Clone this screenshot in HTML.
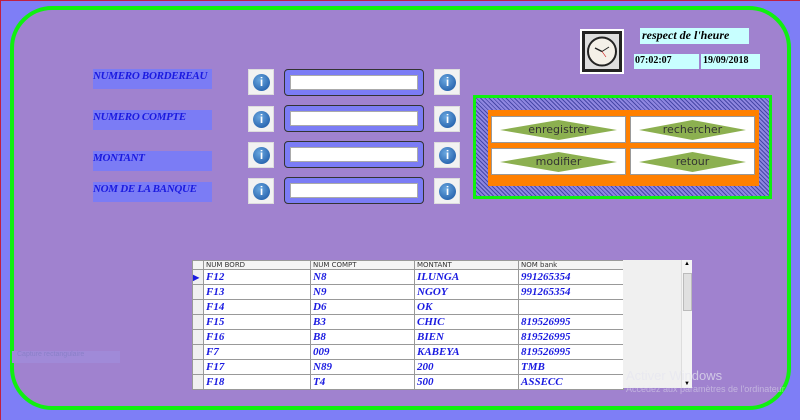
<!DOCTYPE html>
<html><head><meta charset="utf-8"><style>
*{margin:0;padding:0;box-sizing:border-box}
body{width:800px;height:420px;overflow:hidden;background:#7e7ef6;position:relative;font-family:"Liberation Serif",serif}
.frame{position:absolute;left:0;top:0;width:800px;height:420px;border-left:1px solid #c02040;border-top:1px solid #c02040}
.inner{position:absolute;left:10px;top:6px;width:781px;height:404px;border:4px solid #10f010;border-radius:42px;background:#a082cf}
.lbl{position:absolute;left:93px;width:119px;height:20px;background:#7b7cf5;color:#1a1ae0;font-weight:bold;font-style:italic;font-size:11px;padding-top:1px;letter-spacing:-0.3px}
.ib{position:absolute;width:26px;height:26px;background:#f2f2f2;border:1px solid #ddd}
.ib::after{content:"i";position:absolute;left:4px;top:4px;width:17px;height:17px;border-radius:50%;background:radial-gradient(circle at 40% 35%,#6aa8e0,#1450a0);color:#fff;font:bold 12px "Liberation Sans",sans-serif;text-align:center;line-height:17px}
.tb{position:absolute;left:284px;width:140px;height:27px;background:#7b7cf5;border:1px solid #333;border-radius:4px}
.tb div{position:absolute;left:5px;top:5px;width:128px;height:15px;background:#fff;border:1px solid #aaa}
.btnbox{position:absolute;left:473px;top:95px;width:299px;height:104px;border:3px solid #10f010;background:repeating-linear-gradient(45deg,#4848a8 0 1px,#8e86e0 1px 3px)}
.or{position:absolute;left:12px;top:12px;width:271px;height:76px;background:#ff8000}
.b{position:absolute;width:135px;height:27px;background:#fff;border:1px solid #999;font:11px "DejaVu Sans",sans-serif;color:#333;text-align:center;line-height:25px}
.b::before{content:"";position:absolute;left:8px;right:8px;top:3px;height:20px;background:#8cb050;clip-path:polygon(0 50%,50% 0,100% 50%,50% 100%)}
.b span{position:relative}
.cy{position:absolute;background:#c8ffff;font-weight:bold;font-size:10px;color:#000}
table{position:absolute;left:192px;top:260px;border-collapse:collapse;background:#fff}
td{border:1px solid #999;height:15px;line-height:13px;font-weight:bold;font-style:italic;font-size:11px;color:#1a1ae0;padding:0 0 0 2px;white-space:nowrap}
th{border:1px solid #999;height:9px;line-height:8px;font:normal 7px "DejaVu Sans",sans-serif;color:#333;text-align:left;padding-left:2px;background:#f4f4f4}
td.rh{background:#f0f0f0;width:11px;padding:0;color:#1a1ae0;font-style:normal;font-size:8px}
</style></head><body>
<div class="frame"></div>
<div class="inner"></div>
<div class="lbl" style="top:69px">NUMERO BORDEREAU</div>
<div class="lbl" style="top:110px">NUMERO COMPTE</div>
<div class="lbl" style="top:151px">MONTANT</div>
<div class="lbl" style="top:182px">NOM DE LA BANQUE</div>
<div class="ib" style="left:248px;top:69px"></div><div class="ib" style="left:434px;top:69px"></div>
<div class="ib" style="left:248px;top:106px"></div><div class="ib" style="left:434px;top:106px"></div>
<div class="ib" style="left:248px;top:142px"></div><div class="ib" style="left:434px;top:142px"></div>
<div class="ib" style="left:248px;top:178px"></div><div class="ib" style="left:434px;top:178px"></div>
<div class="tb" style="top:69px"><div></div></div>
<div class="tb" style="top:105px"><div></div></div>
<div class="tb" style="top:141px"><div></div></div>
<div class="tb" style="top:177px"><div></div></div>
<div style="position:absolute;left:580px;top:29px;width:44px;height:45px;background:#fff;padding:2px"><div style="width:40px;height:41px;border:3px solid #222;background:#ddd;padding:2px"><svg width="30" height="31" viewBox="0 0 30 31"><circle cx="15" cy="15.5" r="14" fill="#f4f0e8" stroke="#222" stroke-width="2"/><line x1="15" y1="15.5" x2="8" y2="12" stroke="#222" stroke-width="1.5"/><line x1="15" y1="15.5" x2="22" y2="11" stroke="#222" stroke-width="1"/><line x1="15" y1="15.5" x2="19" y2="21" stroke="#c00" stroke-width="0.6"/></svg></div></div>
<div class="cy" style="left:640px;top:28px;width:109px;height:16px;font-size:12px;font-style:italic;padding-left:2px">respect de l'heure</div>
<div class="cy" style="left:634px;top:54px;width:65px;height:15px;padding-left:1px;line-height:13px">07:02:07</div>
<div class="cy" style="left:701px;top:54px;width:59px;height:15px;padding-left:2px;line-height:13px">19/09/2018</div>
<div class="btnbox"><div class="or">
<div class="b" style="left:3px;top:6px"><span>enregistrer</span></div>
<div class="b" style="left:142px;top:6px;width:125px"><span>rechercher</span></div>
<div class="b" style="left:3px;top:38px"><span>modifier</span></div>
<div class="b" style="left:142px;top:38px;width:125px"><span>retour</span></div>
</div></div>
<table>
<tr><th style="width:11px;padding:0"></th><th style="width:107px">NUM BORD</th><th style="width:104px">NUM COMPT</th><th style="width:104px">MONTANT</th><th style="width:105px">NOM bank</th></tr>
<tr><td class="rh">▶</td><td>F12</td><td>N8</td><td>ILUNGA</td><td>991265354</td></tr>
<tr><td class="rh"></td><td>F13</td><td>N9</td><td>NGOY</td><td>991265354</td></tr>
<tr><td class="rh"></td><td>F14</td><td>D6</td><td>OK</td><td></td></tr>
<tr><td class="rh"></td><td>F15</td><td>B3</td><td>CHIC</td><td>819526995</td></tr>
<tr><td class="rh"></td><td>F16</td><td>B8</td><td>BIEN</td><td>819526995</td></tr>
<tr><td class="rh"></td><td>F7</td><td>009</td><td>KABEYA</td><td>819526995</td></tr>
<tr><td class="rh"></td><td>F17</td><td>N89</td><td>200</td><td>TMB</td></tr>
<tr><td class="rh"></td><td>F18</td><td>T4</td><td>500</td><td>ASSECC</td></tr>
</table>
<div style="position:absolute;left:623px;top:260px;width:58px;height:128px;background:#f0f0f0"></div>
<div style="position:absolute;left:681px;top:260px;width:11px;height:128px;background:#f4f4f4;border-left:1px solid #ddd"><div style="position:absolute;left:1px;top:13px;width:9px;height:38px;background:#e0e0e0;border:1px solid #bbb"></div><div style="position:absolute;left:2px;top:1px;font-size:6px">▲</div><div style="position:absolute;left:2px;bottom:1px;font-size:6px">▼</div></div>
<div style="position:absolute;left:12px;top:351px;width:108px;height:12px;background:#a08ad8;font:7px 'Liberation Sans',sans-serif;color:#8a80c8;padding-left:5px">Capture rectangulaire</div>
<div style="position:absolute;left:626px;top:368px;font:13px 'Liberation Sans',sans-serif;color:rgba(230,230,240,0.7)">Activer Windows</div>
<div style="position:absolute;left:626px;top:384px;font:9px 'Liberation Sans',sans-serif;color:rgba(230,230,240,0.5);white-space:nowrap">Accédez aux paramètres de l'ordinateur</div>
</body></html>
